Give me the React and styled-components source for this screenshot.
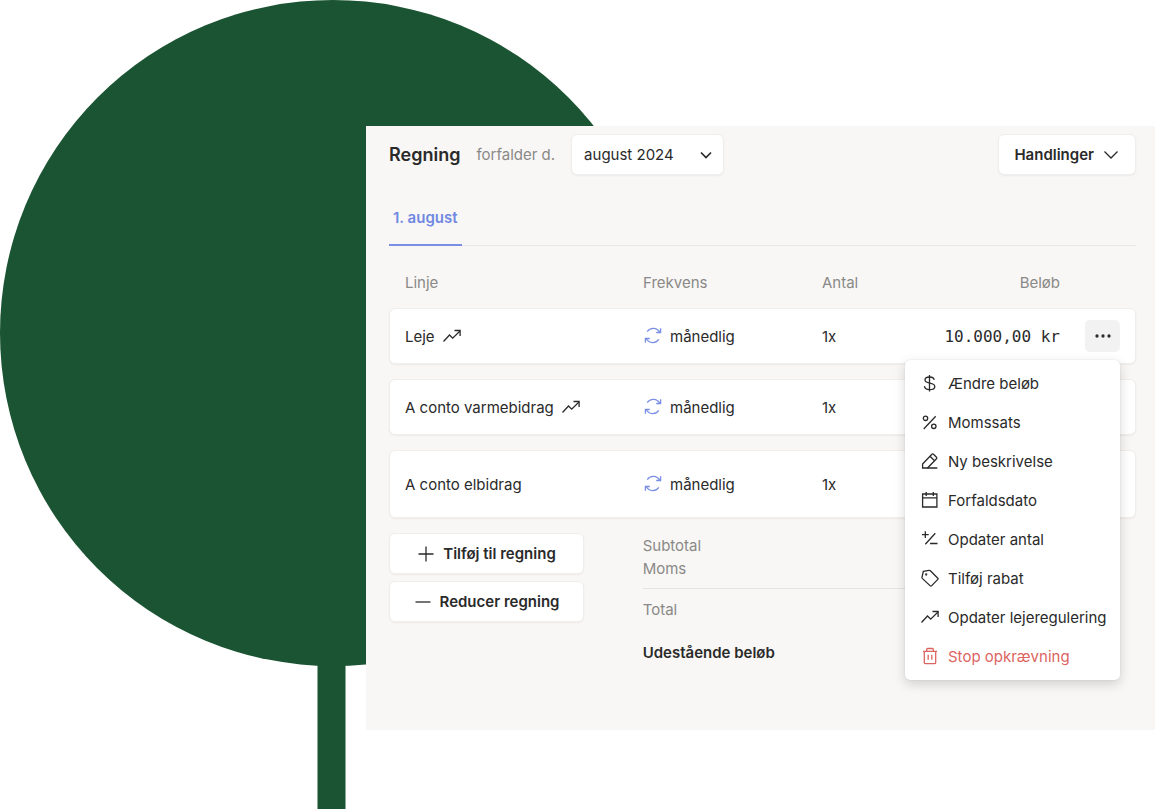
import { useState } from "react";
import styled, { createGlobalStyle } from "styled-components";

const lines = [
  { name: "Leje", regulated: true, amount: "10.000,00 kr", menu: true },
  { name: "A conto varmebidrag", regulated: true },
  { name: "A conto elbidrag", tall: true },
];

const menuItems = [
  { icon: "dollar", label: "Ændre beløb" },
  { icon: "percent", label: "Momssats" },
  { icon: "pencil", label: "Ny beskrivelse" },
  { icon: "calendar", label: "Forfaldsdato" },
  { icon: "plusMinus", label: "Opdater antal" },
  { icon: "tag", label: "Tilføj rabat" },
  { icon: "trend", label: "Opdater lejeregulering" },
  { icon: "trash", label: "Stop opkrævning", danger: true },
];

const icons = {
  dollar: (
    <>
      <path d="M8.500 1v16.500" />
      <path d="M13.200 5.900C12.900 4 11.200 3 8.500 3 5.800 3 4 4.200 4 6c0 4.300 9.800 1.900 9.800 6.400 0 2-2 3.200-5.100 3.200-3.200 0-5-1.200-5.300-3.500" />
    </>
  ),
  percent: (
    <>
      <path d="M14.700 3.300 2.700 16" />
      <circle cx="4.500" cy="5.300" r="2.200" />
      <circle cx="12.800" cy="13.300" r="2.200" />
    </>
  ),
  pencil: (
    <>
      <path d="M1.600 12 10.900 2.300q.8-.8 1.600 0l3 2.900q.8.8 0 1.600L6.500 16H1.600z" />
      <path d="M9 4.300l4.600 4.500M6.500 16h9.800" />
    </>
  ),
  calendar: (
    <>
      <path d="M1.600 3h14.300v13H1.600zM1.600 6.900h14.300" />
      <path d="M5.200 1v4M12.300 1v4" />
    </>
  ),
  plusMinus: (
    <path d="M4.300 1.200v6.800M.9 4.600h6.800M14.300 3.300 4.300 14.300M9 13.500h7.500" />
  ),
  tag: (
    <>
      <path d="M2.300 2.300 8 1.300q.8-.1 1.400.5l7.400 7.400q.6.600 0 1.200l-6.300 6.500q-.6.600-1.200 0L1.500 9.600q-.6-.6-.5-1.300z" />
      <circle cx="5.200" cy="5.500" r=".5" />
    </>
  ),
  trend: (
    <>
      <path d="M.5 14.500 6.500 8l3.200 3.200 7.300-7.200" />
      <path d="M11.500 3.500h5.600v5.600" />
    </>
  ),
  trash: (
    <>
      <path d="M2 4.300h14M3.300 4.300v11.200q0 1.200 1.200 1.200h9q1.200 0 1.200-1.200V4.300" />
      <path d="M5.700 4.300V2.400q0-.9.9-.9h4.800q.9 0 .9.900v1.900M7.200 7.800v5M10.800 7.800v5" />
    </>
  ),
  repeat: (
    <>
      <path d="M3.200 4.700C6.500 0 12.800.4 16 5.500M12.200 5.500h4.400V1.300" />
      <path d="M14.800 12.300C11.500 17 5.200 16.600 2 11.500M5.800 11.500H1.400v4.200" />
    </>
  ),
  chevron: <path d="M2.500 5.500 9 12l6.500-6.500" />,
  plus: <path d="M9 1.500v15M1.500 9h15" />,
  minus: <path d="M1.500 9h15" />,
  dots: (
    <>
      <circle cx="3" cy="9" r="1" fill="currentColor" />
      <circle cx="9" cy="9" r="1" fill="currentColor" />
      <circle cx="15" cy="9" r="1" fill="currentColor" />
    </>
  ),
};

function Icon({ name, ...rest }) {
  return (
    <IconSvg viewBox="0 0 18 18" aria-hidden="true" {...rest}>
      {icons[name]}
    </IconSvg>
  );
}

export default function App() {
  const [month, setMonth] = useState("august 2024");
  const [menuOpen, setMenuOpen] = useState(true);

  return (
    <Page>
      <GlobalStyle />
      <Tree viewBox="0 0 667 809" aria-hidden="true">
        <circle cx="333" cy="333" r="333" />
        <rect x="317.500" y="640" width="28" height="169" />
      </Tree>

      <Panel>
        <Header>
          <Title>Regning</Title>
          <MonthLabel htmlFor="month">forfalder d.</MonthLabel>
          <SelectWrap>
            <MonthSelect
              id="month"
              value={month}
              onChange={(e) => setMonth(e.target.value)}
            >
              <option>august 2024</option>
              <option>september 2024</option>
            </MonthSelect>
            <SelectArrow viewBox="0 0 12 12" aria-hidden="true">
              <path d="M1 3.500l5 5 5-5" />
            </SelectArrow>
          </SelectWrap>
          <ActionsButton type="button">
            Handlinger
            <Icon name="chevron" />
          </ActionsButton>
        </Header>

        <Tabs>
          <Tab type="button">1. august</Tab>
        </Tabs>

        <Table>
          <Head>
            <HeadRow>
              <th>Linje</th>
              <th>Frekvens</th>
              <th>Antal</th>
              <AmountHead>Beløb</AmountHead>
            </HeadRow>
          </Head>
          <Body>
            {lines.map((line) => (
              <Row key={line.name} $tall={line.tall}>
                <Cell>
                  {line.name}
                  {line.regulated && <Icon name="trend" />}
                </Cell>
                <Cell>
                  <RepeatIcon name="repeat" />
                  månedlig
                </Cell>
                <Cell>1x</Cell>
                <Amount>{line.amount}</Amount>
                <MenuCell>
                  {line.menu && (
                    <MoreButton
                      type="button"
                      aria-label="Flere handlinger"
                      aria-expanded={menuOpen}
                      onClick={() => setMenuOpen(!menuOpen)}
                    >
                      <Icon name="dots" />
                    </MoreButton>
                  )}
                  {line.menu && menuOpen && (
                    <Menu>
                      {menuItems.map((item) => (
                        <MenuItem
                          key={item.label}
                          type="button"
                          $danger={item.danger}
                        >
                          <Icon name={item.icon} />
                          {item.label}
                        </MenuItem>
                      ))}
                    </Menu>
                  )}
                </MenuCell>
              </Row>
            ))}
          </Body>
        </Table>

        <Footer>
          <Buttons>
            <Button type="button">
              <Icon name="plus" />
              Tilføj til regning
            </Button>
            <Button type="button">
              <Icon name="minus" />
              Reducer regning
            </Button>
          </Buttons>
          <Summary>
            <p>Subtotal</p>
            <p>Moms</p>
            <Total>Total</Total>
            <Outstanding>Udestående beløb</Outstanding>
          </Summary>
        </Footer>
      </Panel>
    </Page>
  );
}

const GlobalStyle = createGlobalStyle`
  * {
    box-sizing: border-box;
  }

  body {
    margin: 0;
    background: #fff;
    color: #2a2a2a;
    font: 400 15px/23px Inter, "Liberation Sans", sans-serif;
  }

  button,
  select {
    color: inherit;
    font: inherit;
    cursor: pointer;
  }
`;

const Page = styled.div`
  position: relative;
  min-height: 100vh;
  padding: 126px 0 80px 366px;
`;

const Tree = styled.svg`
  position: absolute;
  top: 0;
  left: 0;
  width: 667px;
  height: 809px;
  fill: #1a5432;
`;

const Panel = styled.main`
  position: relative;
  padding: 8px 19px 66px 23px;
  background: #f8f7f5;
`;

const IconSvg = styled.svg`
  flex: none;
  width: 18px;
  height: 18px;
  fill: none;
  stroke: currentColor;
  stroke-width: 1.3;
`;

const Header = styled.header`
  display: flex;
  align-items: center;
`;

const Title = styled.h1`
  margin: 0 16px 0 0;
  font-size: 18px;
  font-weight: 600;
`;

const MonthLabel = styled.label`
  margin-right: 16px;
  color: #8a8987;
`;

const Button = styled.button`
  display: flex;
  align-items: center;
  justify-content: center;
  gap: 8px;
  height: 41px;
  padding: 0 16px;
  border: 1px solid #efeeec;
  border-radius: 6px;
  background: #fff;
  box-shadow: 0 1px 2px rgba(0, 0, 0, 0.05);
  font-weight: 600;
`;

const ActionsButton = styled(Button)`
  margin-left: auto;
  padding: 0 15px;
`;

const SelectWrap = styled.div`
  display: grid;
  align-items: center;
  width: 153px;

  > * {
    grid-area: 1 / 1;
  }
`;

const MonthSelect = styled.select`
  appearance: none;
  width: 100%;
  height: 41px;
  padding: 0 32px 0 12px;
  border: 1px solid #efeeec;
  border-radius: 6px;
  background: #fff;
  box-shadow: 0 1px 2px rgba(0, 0, 0, 0.05);
`;

const SelectArrow = styled.svg`
  justify-self: end;
  width: 12px;
  height: 12px;
  margin-right: 12px;
  fill: none;
  stroke: currentColor;
  stroke-width: 1.7;
  pointer-events: none;
`;

const Tabs = styled.nav`
  display: flex;
  margin-top: 16px;
  border-bottom: 1px solid #e9e8e6;
`;

const Tab = styled.button`
  height: 55px;
  margin-bottom: -1px;
  padding: 0 4px;
  border: 0;
  border-bottom: 2px solid #7a8fe4;
  background: none;
  color: #7088e2;
  font-weight: 600;
`;

const Table = styled.table`
  display: block;
`;

const Head = styled.thead`
  display: block;
`;

const Body = styled.tbody`
  display: grid;
  gap: 15px;
`;

const Row = styled.tr`
  display: grid;
  grid-template-columns: 238fr 179fr 90fr 148fr 60fr;
  align-items: center;
  height: ${({ $tall }) => ($tall ? "68px" : "56px")};
  padding: 0 15px;
  border: 1px solid #efeeec;
  border-radius: 6px;
  background: #fff;
  box-shadow: 0 1px 2px rgba(0, 0, 0, 0.05);
`;

const HeadRow = styled(Row)`
  height: 62px;
  padding-top: 10px;
  border-color: transparent;
  background: none;
  box-shadow: none;

  th {
    padding: 0;
    color: #8a8987;
    font-weight: 400;
    text-align: left;
  }
`;

const AmountHead = styled.th`
  && {
    text-align: right;
  }
`;

const Cell = styled.td`
  display: flex;
  align-items: center;
  gap: 8px;
  padding: 0;
`;

const RepeatIcon = styled(Icon)`
  margin-left: 1px;
  color: #7a8fe4;
`;

const Amount = styled.td`
  padding: 0;
  font-family: "DejaVu Sans Mono", monospace;
  font-size: 16px;
  text-align: right;
  white-space: nowrap;
`;

const MenuCell = styled.td`
  position: relative;
  display: flex;
  justify-content: flex-end;
  padding: 0;
`;

const MoreButton = styled.button`
  display: grid;
  place-items: center;
  width: 35px;
  height: 32px;
  padding: 0;
  border: 0;
  border-radius: 5px;
  background: #f2f2f2;
`;

const Menu = styled.div`
  position: absolute;
  z-index: 1;
  top: 40px;
  right: 0;
  display: flex;
  flex-direction: column;
  width: 215px;
  padding: 4px 0;
  border-radius: 5px;
  background: #fff;
  box-shadow: 0 0 1px rgba(0, 0, 0, 0.2), 0 4px 12px rgba(0, 0, 0, 0.16);
`;

const MenuItem = styled.button`
  display: flex;
  align-items: center;
  gap: 9px;
  height: 39px;
  padding: 0 16px;
  border: 0;
  background: none;
  color: ${({ $danger }) => ($danger ? "#dc6461" : "inherit")};
  white-space: nowrap;

  ${IconSvg} {
    margin-bottom: 2px;
  }
`;

const Footer = styled.footer`
  display: grid;
  grid-template-columns: 254fr 418fr 76fr;
  margin-top: 15px;
`;

const Buttons = styled.div`
  display: flex;
  flex-direction: column;
  gap: 7px;
  width: 195px;
`;

const Summary = styled.section`
  margin-top: 1px;
  color: #8a8987;

  p {
    margin: 0;
  }
`;

const Total = styled.p`
  && {
    margin-top: 8px;
    padding-top: 9px;
    border-top: 1px solid #e4e3e1;
  }
`;

const Outstanding = styled.p`
  && {
    margin-top: 20px;
    color: #2a2a2a;
    font-weight: 600;
  }
`;
